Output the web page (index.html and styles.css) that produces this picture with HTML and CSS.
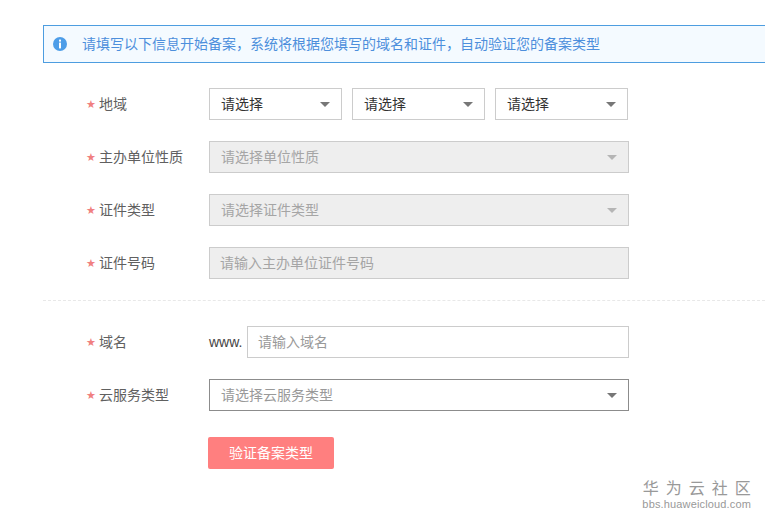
FILE: index.html

```html
<!DOCTYPE html>
<html lang="zh-CN">
<head>
    <meta charset="UTF-8">
    <title>备案类型验证</title>
    <link rel="stylesheet" href="styles.css">
</head>
<body>
    <div class="page">
        <!-- 提示 -->
        <div class="alert">
            <svg class="alert-icon" viewBox="0 0 14 14">
                <circle cx="7" cy="7" r="7" fill="#4d9de8"></circle>
                <rect x="6" y="2.6" width="2" height="2" fill="#fff"></rect>
                <rect x="6" y="5.6" width="2" height="5.8" fill="#fff"></rect>
            </svg>
            <span class="text">请填写以下信息开始备案，系统将根据您填写的域名和证件，自动验证您的备案类型</span>
        </div>

        <div class="form">
            <div class="row">
                <label class="label"><i>★</i><span class="text">地域</span></label>
                <div class="group">
                    <div class="field select"><span class="text value">请选择</span><b class="arrow"></b></div>
                    <div class="field select"><span class="text value">请选择</span><b class="arrow"></b></div>
                    <div class="field select"><span class="text value">请选择</span><b class="arrow"></b></div>
                </div>
            </div>
            <div class="row">
                <label class="label"><i>★</i><span class="text">主办单位性质</span></label>
                <div class="field wide select disabled"><span class="text">请选择单位性质</span><b class="arrow"></b></div>
            </div>
            <div class="row">
                <label class="label"><i>★</i><span class="text">证件类型</span></label>
                <div class="field wide select disabled"><span class="text">请选择证件类型</span><b class="arrow"></b></div>
            </div>
            <div class="row">
                <label class="label"><i>★</i><span class="text">证件号码</span></label>
                <div class="field wide input disabled"><span class="text">请输入主办单位证件号码</span></div>
            </div>
        </div>

        <div class="divider"></div>

        <div class="form">
            <div class="row">
                <label class="label"><i>★</i><span class="text">域名</span></label>
                <span class="prefix">www.</span>
                <div class="field domain input"><span class="text hint">请输入域名</span></div>
            </div>
            <div class="row">
                <label class="label"><i>★</i><span class="text">云服务类型</span></label>
                <div class="field wide select focus"><span class="text hint">请选择云服务类型</span><b class="arrow"></b></div>
            </div>
            <div class="row action">
                <button class="submit"><span class="text">验证备案类型</span></button>
            </div>
        </div>
    </div>

    <!-- 水印 -->
    <div class="mark">
        <div class="mark-name">华为云社区</div>
        <div class="mark-url">bbs.huaweicloud.com</div>
    </div>
</body>
</html>
```

FILE: styles.css

```css
html, body {
    margin: 0;
    height: 100%;
    overflow: hidden;
}
body {
    position: relative;
    background: #fff;
    color: #606060;
    font-family: "Noto Sans CJK SC", "Liberation Sans", sans-serif;
    font-size: 14px;
}
.page {
    padding: 25px 0 0 43px;
}
.text {
    display: block;
    padding-bottom: 2px;
}
.alert {
    display: flex;
    align-items: center;
    gap: 15px;
    height: 36px;
    padding-left: 9px;
    border: 1px solid #4d9de0;
    border-right: 0;
    background: #f4faff;
    color: #4d8fdc;
}
.alert-icon {
    width: 14px;
    height: 14px;
}
.form {
    display: flex;
    flex-direction: column;
    gap: 21px;
}
.alert + .form {
    margin-top: 25px;
}
.row {
    display: flex;
    align-items: center;
    height: 32px;
}
.action {
    margin-top: 5px;
}
.label {
    display: flex;
    align-items: center;
    width: 166px;
    padding-left: 43px;
    box-sizing: border-box;
}
.label i {
    width: 13px;
    color: #f08080;
    font-family: "DejaVu Sans", sans-serif;
    font-style: normal;
    font-size: 11px;
}
.group {
    display: flex;
    gap: 10px;
}
.field {
    display: flex;
    align-items: center;
    justify-content: space-between;
    box-sizing: border-box;
    width: 133px;
    height: 32px;
    padding: 0 11px;
    border: 1px solid #ccc;
    background: #fff;
}
.input {
    padding: 0 10px;
}
.value {
    color: #333;
}
.hint {
    color: #999;
}
.wide {
    width: 420px;
}
.disabled {
    background: #eee;
    color: #a5a5a5;
}
.focus {
    border-color: #8c8c8c;
}
.arrow {
    width: 0;
    height: 0;
    border-left: 5px solid transparent;
    border-right: 5px solid transparent;
    border-top: 5px solid #777;
}
.disabled .arrow {
    border-top-color: #b5b5b5;
}
.prefix {
    width: 38px;
    color: #444;
    font-family: "Liberation Sans", sans-serif;
    font-size: 14px;
}
.domain {
    width: 382px;
}
.divider {
    height: 0;
    margin: 21px 0 25px;
    border-top: 1px dashed #e8e8e8;
}
.submit {
    width: 126px;
    height: 32px;
    margin-left: 165px;
    padding: 0;
    border: 0;
    border-radius: 2px;
    background: #ff7f7f;
    color: #fff;
    font: inherit;
}
.mark {
    position: absolute;
    right: 14px;
    bottom: 7px;
    color: #999;
    text-align: center;
}
.mark-name {
    font-size: 16px;
    line-height: 20px;
    letter-spacing: 7px;
    margin-right: -7px;
    margin-bottom: 1px;
}
.mark-url {
    font-family: "Liberation Sans", sans-serif;
    font-size: 11px;
    line-height: 13px;
    letter-spacing: 0.15px;
}
```
